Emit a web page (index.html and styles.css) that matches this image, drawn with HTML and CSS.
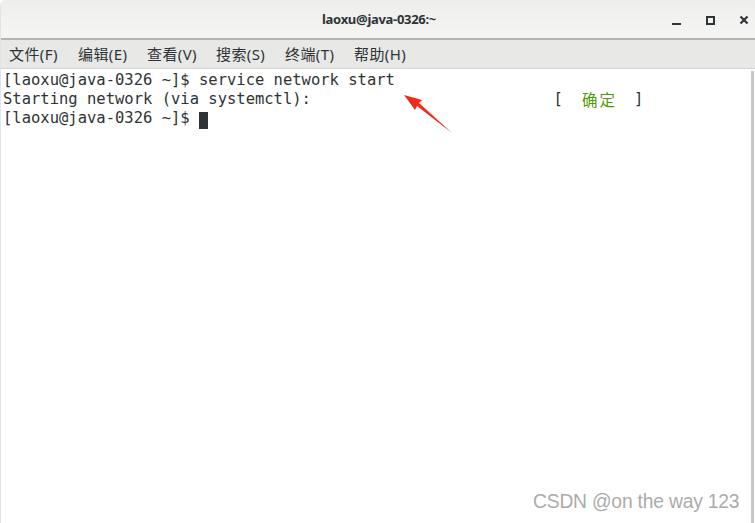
FILE: index.html
```html
<!DOCTYPE html>
<html lang="zh-CN">
<head>
    <meta charset="UTF-8">
    <title>laoxu@java-0326:~</title>
    <link rel="stylesheet" href="styles.css">
</head>
<body>
    <div class="window">
        <!-- Title bar -->
        <div class="titlebar">
            <span class="title">laoxu@java-0326:~</span>
            <div class="win-btns">
                <span class="wb wb-min"></span>
                <span class="wb wb-max"></span>
                <span class="wb wb-close">
                    <svg width="10" height="10" viewBox="0 0 10 10"><path d="M1.5 1.5 L8.5 8.5 M8.5 1.5 L1.5 8.5" stroke="#2e3436" stroke-width="2.2"/></svg>
                </span>
            </div>
        </div>
        <!-- Menu bar -->
        <div class="menubar">
            <span class="menu">文件(F)</span>
            <span class="menu">编辑(E)</span>
            <span class="menu">查看(V)</span>
            <span class="menu">搜索(S)</span>
            <span class="menu">终端(T)</span>
            <span class="menu">帮助(H)</span>
        </div>
        <!-- Terminal -->
        <div class="terminal">
            <div class="line">[laoxu@java-0326 ~]$ service network start</div>
            <div class="line">
                <span class="msg">Starting network (via systemctl):</span>
                <span class="br">[</span>
                <span class="ok">确定</span>
                <span class="br">]</span>
            </div>
            <div class="line">[laoxu@java-0326 ~]$ <span class="cursor"></span></div>
            <div class="scrollbar"></div>
        </div>
    </div>

    <svg class="arrow" width="70" height="60" viewBox="0 0 70 60">
        <path d="M53 47 L18 20 L16 24 L5 9 L23 14 L20 17 Z" fill="#f22a1a"/>
    </svg>

    <div class="watermark">CSDN @on the way 123</div>
</body>
</html>
```

FILE: styles.css
```css
*{
    box-sizing: border-box;
}
html, body{
    margin: 0;
    height: 100%;
    background-color: #ffffff;
}
body{
    position: relative;
    overflow: hidden;
}
.window{
    height: 523px;
    display: flex;
    flex-direction: column;
    border-left: 1px solid #e4e4e4;
    border-top-left-radius: 6px;
    overflow: hidden;
}

/* Title bar */
.titlebar{
    height: 40px;
    background: linear-gradient(#eeeeed, #f5f5f4);
    border-bottom: 2px solid #b6b6b0;
    display: flex;
    align-items: center;
    justify-content: center;
    position: relative;
}
.title{
    font-family: "Noto Sans", sans-serif;
    font-size: 13px;
    font-weight: bold;
    color: #2e3436;
    letter-spacing: -0.3px;
    margin-left: 2px;
    margin-top: -1px;
}
.win-btns{
    position: absolute;
    right: 6px;
    top: 13px;
    display: flex;
    gap: 24px;
    align-items: center;
}
.wb{
    width: 10px;
    height: 10px;
    display: flex;
    align-items: center;
    justify-content: center;
}
.wb-min::after{
    content: "";
    width: 9px;
    height: 2px;
    background-color: #2e3436;
    margin-top: 10px;
}
.wb-max::after{
    content: "";
    width: 9px;
    height: 9px;
    border: 2px solid #2e3436;
    box-sizing: border-box;
    margin-top: 2px;
}
.wb-close{
    margin-top: 2px;
}

/* Menu bar */
.menubar{
    height: 29px;
    background-color: #e8e8e7;
    border-bottom: 1px solid #d6d6d4;
    display: flex;
    align-items: center;
    gap: 17px;
    padding-left: 8px;
    padding-bottom: 2px;
}
.menu{
    width: 52px;
    font-family: "Noto Sans", "Noto Sans CJK SC", sans-serif;
    font-size: 15px;
    color: #2e3436;
    letter-spacing: 0.4px;
    white-space: nowrap;
}

/* Terminal */
.terminal{
    flex: 1;
    position: relative;
    background-color: #ffffff;
    padding: 2px 0 0 2px;
    font-family: "DejaVu Sans Mono", "Noto Sans CJK SC", monospace;
    font-size: 15.5px;
    color: #2e3436;
}
.line{
    height: 19px;
    line-height: 19px;
    white-space: pre;
    display: flex;
    align-items: center;
}
.msg{
    width: 59ch;
}
.br{
    width: 1ch;
}
.ok{
    width: 71px;
    padding-left: 19px;
    color: #4e9a06;
    font-family: "Noto Sans CJK SC", sans-serif;
    font-size: 15.5px;
    letter-spacing: 2px;
}
.cursor{
    display: inline-block;
    width: 9px;
    height: 17px;
    background-color: #2e3436;
    margin-top: 3px;
}
.scrollbar{
    position: absolute;
    right: 1px;
    top: 2px;
    bottom: 0;
    width: 3px;
    background-color: #c8c8c8;
}

/* Overlays */
.arrow{
    position: absolute;
    left: 399px;
    top: 86px;
}
.watermark{
    position: absolute;
    left: 533px;
    top: 491px;
    font-family: "Liberation Sans", Arial, sans-serif;
    font-size: 19.3px;
    color: #ababab;
    letter-spacing: -0.2px;
}
```
